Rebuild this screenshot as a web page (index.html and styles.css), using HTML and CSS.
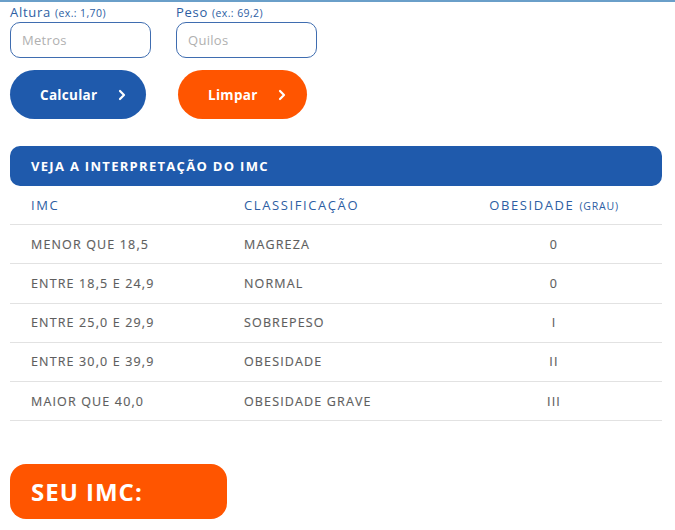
FILE: index.html
```html
<!DOCTYPE html>
<html lang="pt">
<head>
<meta charset="utf-8">
<title>IMC</title>
<link rel="stylesheet" href="styles.css">
</head>
<body>
<div class="topline"></div>
<div class="page">
  <div class="fields">
    <div class="field f1">
      <label class="label">Altura <small>(ex.: 1,70)</small></label>
      <input class="input" type="text" placeholder="Metros">
    </div>
    <div class="field f2">
      <label class="label">Peso <small>(ex.: 69,2)</small></label>
      <input class="input" type="text" placeholder="Quilos">
    </div>
  </div>
  <div class="buttons">
    <button class="btn btn-blue">Calcular <svg class="chev" width="10" height="14" viewBox="0 0 10 14"><path d="M3 3 L7 7 L3 11" fill="none" stroke="#fff" stroke-width="2.2" stroke-linecap="round" stroke-linejoin="round"/></svg></button>
    <button class="btn btn-orange">Limpar <svg class="chev" width="10" height="14" viewBox="0 0 10 14"><path d="M3 3 L7 7 L3 11" fill="none" stroke="#fff" stroke-width="2.2" stroke-linecap="round" stroke-linejoin="round"/></svg></button>
  </div>
  <div class="table">
    <div class="table-title">VEJA A INTERPRETAÇÃO DO IMC</div>
    <div class="row head">
      <div class="c1">IMC</div>
      <div class="c2">CLASSIFICAÇÃO</div>
      <div class="c3">OBESIDADE <small>(GRAU)</small></div>
    </div>
    <div class="row">
      <div class="c1">MENOR QUE 18,5</div>
      <div class="c2">MAGREZA</div>
      <div class="c3">0</div>
    </div>
    <div class="row">
      <div class="c1">ENTRE 18,5 E 24,9</div>
      <div class="c2">NORMAL</div>
      <div class="c3">0</div>
    </div>
    <div class="row">
      <div class="c1">ENTRE 25,0 E 29,9</div>
      <div class="c2">SOBREPESO</div>
      <div class="c3">I</div>
    </div>
    <div class="row">
      <div class="c1">ENTRE 30,0 E 39,9</div>
      <div class="c2">OBESIDADE</div>
      <div class="c3">II</div>
    </div>
    <div class="row">
      <div class="c1">MAIOR QUE 40,0</div>
      <div class="c2">OBESIDADE GRAVE</div>
      <div class="c3">III</div>
    </div>
  </div>
  <div class="result">SEU IMC:</div>
</div>
</body>
</html>
```
FILE: styles.css
```css
* { box-sizing: border-box; }
html, body { margin: 0; padding: 0; background: #fff; }
body { font-family: "Open Sans", "Liberation Sans", sans-serif; color: #666; }
.topline { height: 2px; background: #6a9fc9; }
.page { padding: 0 13px 0 10px; }
.fields { display: flex; gap: 25px; padding-top: 2px; }
.field { display: flex; flex-direction: column; width: 141px; }
.label { color: #2d5ea3; font-size: 13px; line-height: 16px; height: 16px; letter-spacing: 0.7px; }
.label small { font-size: 10.5px; letter-spacing: 0.4px; }
.input {
  margin-top: 2px;
  height: 36px;
  border: 1px solid #3f6db0;
  border-radius: 10px;
  padding: 0 11px;
  font-family: inherit;
  font-size: 13px;
  color: #999;
  outline: none;
}
.input::placeholder { color: #b0b0b0; letter-spacing: 0.3px; }
.buttons { display: flex; gap: 32px; margin-top: 12px; }
.btn {
  height: 49px;
  border: 0;
  border-radius: 25px;
  color: #fff;
  font-family: inherit;
  font-weight: 700;
  font-size: 13.5px;
  letter-spacing: 0.3px;
  display: flex;
  align-items: center;
  padding: 0 0 0 30px;
  gap: 19px;
}
.btn-blue { background: #1f5aac; width: 136px; }
.btn-orange { background: #ff5500; width: 129px; }
.chev { display: block; }
.table { margin-top: 27px; }
.table-title {
  height: 40px;
  background: #1f5aac;
  border-radius: 10px;
  color: #fff;
  font-weight: 700;
  font-size: 13px;
  letter-spacing: 1.3px;
  display: flex;
  align-items: center;
  padding-left: 21px;
}
.row {
  display: grid;
  grid-template-columns: 234px 222px 176px 20px;
  height: 39.2px;
  align-items: center;
  border-bottom: 1px solid #e2e2e2;
  font-size: 12.5px;
  letter-spacing: 1.15px;
  color: #5e5e5e;
  -webkit-text-stroke: 0.15px #5e5e5e;
}
.row.head { color: #2d5ea3; font-size: 13px; letter-spacing: 1.6px; -webkit-text-stroke: 0; }
.row.head small { font-size: 10.5px; letter-spacing: 0.8px; }
.c1 { padding-left: 21px; }
.c3 { text-align: center; }
.result {
  margin-top: 43px;
  width: 217px;
  height: 55px;
  background: #ff5500;
  border-radius: 16px;
  color: #fff;
  font-weight: 700;
  font-size: 24px;
  letter-spacing: 1px;
  display: flex;
  align-items: center;
  padding-left: 21px;
}
```
